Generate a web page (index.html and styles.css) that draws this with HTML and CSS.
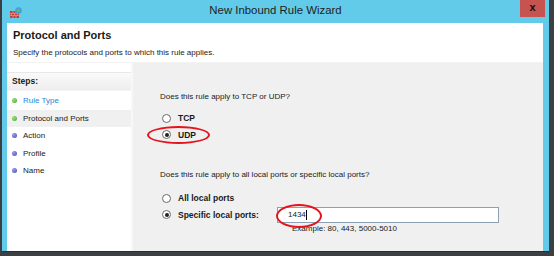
FILE: index.html
```html
<!DOCTYPE html>
<html>
<head>
<meta charset="utf-8">
<link rel="stylesheet" href="styles.css">
</head>
<body>
<div class="desk">
  <div class="window">
    <div class="titlebar">
      <svg class="appicon" width="12" height="12" viewBox="0 0 12 12">
        <rect x="0" y="4" width="9" height="7" fill="#b8413a"/>
        <path d="M0 6.3H9M0 8.6H9M3 4V6.3M6 4V6.3M1.5 6.3V8.6M4.5 6.3V8.6M7.5 6.3V8.6M3 8.6V11M6 8.6V11" stroke="#e9a090" stroke-width="0.7" fill="none"/>
        <circle cx="8.5" cy="3.5" r="3.2" fill="#4a9ad8"/>
        <path d="M6.5 2.5 Q8 1 9.5 2.2 Q10.5 4 9 5 Q7.5 5.2 6.8 4.2Z" fill="#5cc05a"/>
      </svg>
      <div class="title">New Inbound Rule Wizard</div>
      <div class="close">x</div>
    </div>
    <div class="client">
      <div class="header">
        <div class="h-title">Protocol and Ports</div>
        <div class="h-sub">Specify the protocols and ports to which this rule applies.</div>
      </div>
      <div class="body">
        <div class="steps">
          <div class="steps-head">Steps:</div>
          <div class="step link"><span class="dot green"></span>Rule Type</div>
          <div class="step sel"><span class="dot green"></span>Protocol and Ports</div>
          <div class="step"><span class="dot blue"></span>Action</div>
          <div class="step"><span class="dot blue"></span>Profile</div>
          <div class="step"><span class="dot blue"></span>Name</div>
        </div>
        <div class="main">
          <div class="q q1">Does this rule apply to TCP or UDP?</div>
          <div class="opt"><span class="radio"></span><span class="lbl">TCP</span></div>
          <div class="opt udp"><span class="radio on"></span><span class="lbl">UDP</span><span class="ring ring-udp"></span></div>
          <div class="q q2">Does this rule apply to all local ports or specific local ports?</div>
          <div class="opt"><span class="radio"></span><span class="lbl">All local ports</span></div>
          <div class="opt spec">
            <span class="radio on"></span><span class="lbl lbl-spec">Specific local ports:</span>
            <div class="field">1434<span class="caret"></span><span class="ring ring-port"></span></div>
          </div>
          <div class="example">Example: 80, 443, 5000-5010</div>
        </div>
      </div>
    </div>
  </div>
</div>
</body>
</html>
```

FILE: styles.css
```css
html, body {
  margin: 0;
  padding: 0;
}
body {
  width: 554px;
  height: 256px;
  overflow: hidden;
  background: #5a5a5a;
  font-family: "Liberation Sans", Arial, sans-serif;
  color: #1a1a1a;
}
.desk {
  width: 554px;
  height: 256px;
  background: #3c3f44;
  display: flex;
  padding-left: 2px;
  box-sizing: border-box;
}
.window {
  width: 547px;
  height: 252px;
  background: #62cbe9;
  display: flex;
  flex-direction: column;
  border-bottom: 1px solid #2c2c2c;
  box-sizing: border-box;
}
.titlebar {
  height: 23px;
  display: flex;
  align-items: flex-start;
  position: relative;
}
.appicon {
  margin: 7px 0 0 8px;
}
.title {
  position: absolute;
  left: 0;
  right: 0;
  top: 4px;
  text-align: center;
  font-size: 11.4px;
  color: #1e1e1e;
}
.close {
  position: absolute;
  right: 4px;
  top: 0;
  width: 25px;
  height: 17px;
  background: #c75350;
  color: #111;
  font-weight: bold;
  font-size: 11px;
  line-height: 15px;
  text-align: center;
}
.client {
  flex: 1;
  margin: 0 6px 0 5px;
  background: #fff;
  display: flex;
  flex-direction: column;
}
.header {
  height: 40px;
  padding-left: 6px;
  border-bottom: 1px solid #f3f3f3;
  box-sizing: border-box;
}
.h-title {
  font-weight: bold;
  font-size: 11px;
  margin-top: 6px;
  height: 13px;
  line-height: 13px;
}
.h-sub {
  font-size: 8px;
  margin-top: 6px;
  line-height: 10px;
}
.body {
  flex: 1;
  display: flex;
}
.steps {
  width: 124px;
  background: #fff;
  padding-top: 9px;
  border-right: 2px solid #f7f7f7;
}
.steps-head {
  height: 17px;
  line-height: 17px;
  font-weight: bold;
  font-size: 8.5px;
  padding-left: 5px;
  background: linear-gradient(#fafafa, #eeeeee);
  border-top: 1px solid #e8e8e8;
  border-bottom: 1px solid #f4f4f4;
  margin-bottom: 1px;
}
.step {
  height: 17.5px;
  line-height: 17.5px;
  font-size: 8px;
  display: flex;
  align-items: center;
  padding-left: 5px;
}
.step.link { color: #2f7fd8; }
.step.sel { background: #f0f0f0; }
.dot {
  width: 5px;
  height: 5px;
  border-radius: 50%;
  margin-right: 6px;
}
.dot.green { background: radial-gradient(circle at 35% 35%, #9be27a, #3ba82c); }
.dot.blue { background: radial-gradient(circle at 35% 35%, #9b9bf0, #4747b8); }
.main {
  flex: 1;
  background: #f0f0f0;
  padding-left: 27px;
  padding-top: 28px;
  font-size: 8px;
}
.q {
  height: 12px;
  line-height: 12px;
}
.q2 { margin-top: 26px; }
.opt {
  display: flex;
  align-items: center;
  height: 16.5px;
  position: relative;
  font-size: 8.5px;
}
.q1 + .opt { margin-top: 7px; }
.q2 + .opt { margin-top: 9px; }
.radio {
  width: 9px;
  height: 9px;
  border: 1px solid #6a6a6a;
  border-radius: 50%;
  background: #fff;
  box-sizing: border-box;
  margin-left: 2px;
  margin-right: 7px;
  display: flex;
  align-items: center;
  justify-content: center;
}
.radio.on::after {
  content: "";
  width: 4px;
  height: 4px;
  border-radius: 50%;
  background: #222;
}
.lbl {
  font-weight: bold;
}
.lbl-spec {
  width: 99px;
}
.field {
  position: relative;
  width: 222px;
  height: 16px;
  box-sizing: border-box;
  border: 1px solid #8ea0b4;
  background: #fff;
  font-size: 8px;
  font-weight: normal;
  line-height: 14px;
  padding-left: 10px;
  display: flex;
  align-items: center;
}
.caret {
  width: 1px;
  height: 10px;
  background: #000;
  margin-left: 0.5px;
}
.example {
  padding-left: 132px;
  line-height: 12px;
  height: 12px;
}
.ring {
  position: absolute;
  border: 2px solid #e3141e;
  border-radius: 50%;
  box-sizing: border-box;
}
.ring-udp {
  left: -13px;
  top: -1px;
  width: 63px;
  height: 18px;
}
.ring-port {
  left: -2px;
  top: -4px;
  width: 46px;
  height: 24px;
}
```
